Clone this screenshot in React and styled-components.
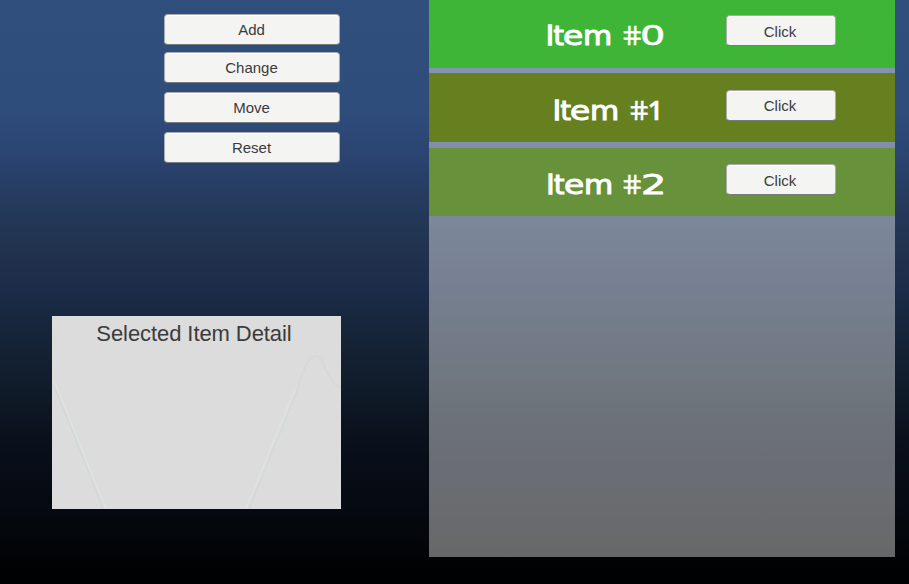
import React from "react";
import styled, { createGlobalStyle } from "styled-components";

const GlobalStyle = createGlobalStyle`
  * { box-sizing: border-box; }
  body { margin: 0; overflow: hidden; background: #000; }
`;

const Screen = styled.main`
  display: flex;
  width: 909px;
  height: 584px;
  font-family: "Liberation Sans", Arial, sans-serif;
  color: #3b3b3b;
  background: linear-gradient(
    to bottom,
    #314f7c 0,
    #2f4d7b 105px,
    #2b4472 155px,
    #273f66 180px,
    #243a5b 210px,
    #21334f 245px,
    #1c2b49 290px,
    #162539 330px,
    #111d2c 380px,
    #0b131f 425px,
    #070c16 475px,
    #04080d 525px,
    #010204 562px,
    #000103 584px
  );
`;

const Sidebar = styled.section`
  display: flex;
  flex-direction: column;
  width: 429px;
  padding: 14px 0 0 52px;
`;

const Controls = styled.div`
  display: grid;
  grid-template-rows: 38px 40px 40px 31px;
  align-items: start;
  margin-left: 112px;
`;

const Button = styled.button`
  display: flex;
  align-items: center;
  justify-content: center;
  width: ${(p) => p.$width}px;
  height: 31px;
  padding: 0 1px 1px 0;
  border: 1px solid #a9aaab;
  border-bottom-color: #777b7b;
  border-radius: 4px;
  background: #f4f4f3;
  box-shadow: inset 0 1px #fff;
  color: #3b3b3b;
  font: 15px "Liberation Sans", Arial, sans-serif;
`;

const ClickButton = styled(Button)`
  padding: ${(p) => p.$drop}px 2px 0 0;
`;

const Detail = styled.div`
  position: relative;
  width: 289px;
  height: 193px;
  margin-top: 153px;
  background: #dcdcdc;
`;

const DetailTitle = styled.h2`
  margin: 0;
  padding: 5px 5px 0 0;
  font-size: 22px;
  font-weight: 400;
  line-height: 26px;
  letter-spacing: -0.08px;
  text-align: center;
`;

const Contours = styled.svg`
  position: absolute;
  inset: 0;
`;

const List = styled.section`
  display: grid;
  grid-template-rows: 73px 75px 68px;
  align-items: start;
  width: 466px;
  height: 557px;
  background: rgba(255, 255, 255, 0.4);
`;

const Row = styled.article`
  display: grid;
  grid-template-columns: 297px 110px;
  align-items: start;
  height: ${(p) => p.$height}px;
  padding-top: ${(p) => p.$inset}px;
  background: ${(p) => p.$color};
`;

const RowTitle = styled.div`
  display: flex;
  height: 31px;
  margin-top: 5px;
  padding-left: ${(p) => p.$indent}px;
  color: #fff;
  font: 26.5px/31px "DejaVu Sans", sans-serif;
`;

const Glyph = styled.span`
  display: block;
  flex: none;
  width: ${(p) => p.$width}px;
  transform: scaleX(${(p) => p.$scale || 1}) skewX(${(p) => p.$skew || 0}deg);
  transform-origin: 0 50%;
  -webkit-text-stroke: ${(p) => p.$stroke ?? 1}px #fff;
`;

const NarrowDigit = styled(Glyph)`
  font-family: "Open Sans", sans-serif;
  font-size: 27.5px;
  font-weight: 600;
  line-height: 30px;
`;

/* Letters are stretched individually to get the extended display face. */
const letters = [
  { char: "I", width: 7.5, stroke: 1.4 },
  { char: "t", width: 9.5, stroke: 1.2 },
  { char: "e", width: 20.2, scale: 1.24 },
  { char: "m", width: 37.4, scale: 1.13 },
  { char: "#", width: 19.8, scale: 1, skew: 13, stroke: 0.3 },
];

const items = [
  { digit: "0", color: "#3eb537", height: 68, inset: 15, indent: 117, scale: 1.5, drop: 1, stroke: 0.6 },
  { digit: "1", color: "#667f1f", height: 69, inset: 17, indent: 124, drop: 0, stroke: 0.4 },
  { digit: "2", color: "#67913a", height: 68, inset: 16, indent: 117.6, scale: 1.5, drop: 1, stroke: 0.8 },
];

export default function App() {
  return (
    <>
      <GlobalStyle />
      <Screen>
        <Sidebar>
          <Controls>
            {["Add", "Change", "Move", "Reset"].map((name) => (
              <Button key={name} $width={176}>{name}</Button>
            ))}
          </Controls>
          <Detail>
            <Contours width="289" height="193" fill="none">
              <path d="M0 68 Q5 76 8 84 L51 193 M197 193 L246 73 Q254 41 263 40 Q269 39 274 54 Q281 70 289 71" stroke="#d3d9d8" strokeWidth="1.4" />
              <path d="M3 67 L54 193 M194 193 L243 73" stroke="#dfe3e1" strokeWidth="1.2" />
            </Contours>
            <DetailTitle>Selected Item Detail</DetailTitle>
          </Detail>
        </Sidebar>
        <List>
          {items.map((item) => {
            const Digit = item.scale ? Glyph : NarrowDigit;
            return (
              <Row key={item.digit} $color={item.color} $height={item.height} $inset={item.inset}>
                <RowTitle $indent={item.indent}>
                  {letters.map((l) => (
                    <Glyph key={l.char} $width={l.width} $scale={l.scale} $skew={l.skew} $stroke={l.stroke}>{l.char}</Glyph>
                  ))}
                  <Digit $width={14} $scale={item.scale} $stroke={item.stroke}>{item.digit}</Digit>
                </RowTitle>
                <ClickButton $width={110} $drop={item.drop}>Click</ClickButton>
              </Row>
            );
          })}
        </List>
      </Screen>
    </>
  );
}
